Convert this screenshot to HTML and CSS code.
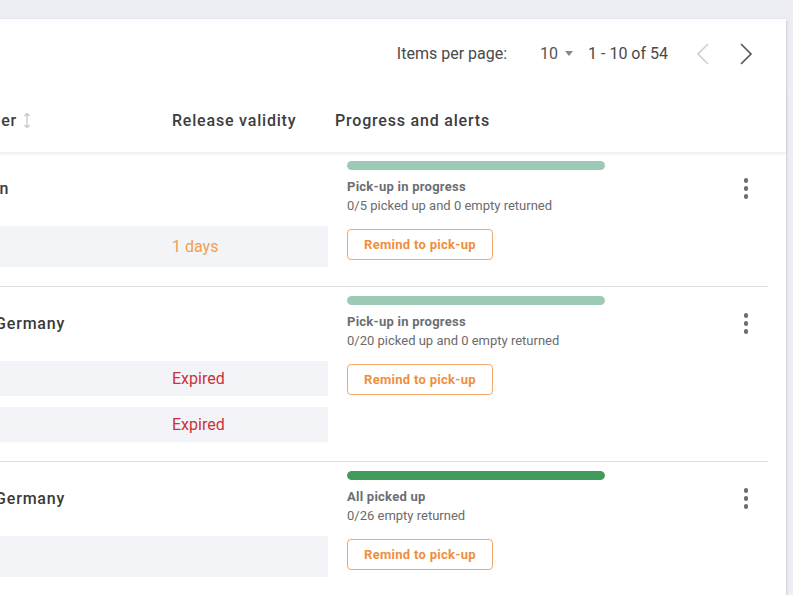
FILE: index.html
```html
<!DOCTYPE html>
<html lang="en">
<head>
    <meta charset="utf-8">
    <title>Releases</title>
    <link rel="stylesheet" href="styles.css">
</head>
<body>
<div class="page">
    <div class="card">
        <!-- paginator -->
        <div class="paginator">
            <span class="pg-label">Items per page:</span>
            <span class="pg-size">10<i class="caret"></i></span>
            <span class="pg-range">1 - 10 of 54</span>
            <button class="pg-btn disabled" type="button">
                <svg width="14" height="22" viewBox="0 0 14 22"><path d="M12 1L2 11l10 10" fill="none" stroke="currentColor" stroke-width="1.6"/></svg>
            </button>
            <button class="pg-btn" type="button">
                <svg width="14" height="22" viewBox="0 0 14 22"><path d="M2 1l10 10L2 21" fill="none" stroke="currentColor" stroke-width="1.6"/></svg>
            </button>
        </div>
        <!-- table head -->
        <div class="thead">
            <div class="th th-name">Shipping carrier
                <svg class="sort" width="8" height="17" viewBox="0 0 8 17"><path d="M4 1.5v14M1.5 4L4 1.5 6.5 4M1.5 13L4 15.5 6.5 13" fill="none" stroke="currentColor" stroke-width="1.2"/></svg>
            </div>
            <div class="th th-valid">Release validity</div>
            <div class="th th-progress">Progress and alerts</div>
        </div>
        <!-- rows -->
        <div class="trow">
            <div class="cells">
                <div class="name">Maersk Taiwan</div>
                <div class="sub-row"><span></span><span class="val warn">1 days</span></div>
            </div>
            <div class="progress">
                <div class="bar"><div class="bar-fill half"></div></div>
                <div class="p-title">Pick-up in progress</div>
                <div class="p-desc">0/5 picked up and 0 empty returned</div>
                <button class="btn-remind" type="button">Remind to pick-up</button>
            </div>
            <div class="kebab"><i></i><i></i><i></i></div>
        </div>
        <div class="trow">
            <div class="cells">
                <div class="name">Hapag-Lloyd Germany</div>
                <div class="sub-row sm"><span></span><span class="val error">Expired</span></div>
                <div class="sub-row sm"><span></span><span class="val error">Expired</span></div>
            </div>
            <div class="progress">
                <div class="bar"><div class="bar-fill half"></div></div>
                <div class="p-title">Pick-up in progress</div>
                <div class="p-desc">0/20 picked up and 0 empty returned</div>
                <button class="btn-remind" type="button">Remind to pick-up</button>
            </div>
            <div class="kebab"><i></i><i></i><i></i></div>
        </div>
        <div class="trow">
            <div class="cells">
                <div class="name">Hapag-Lloyd Germany</div>
                <div class="sub-row"><span></span><span class="val"></span></div>
            </div>
            <div class="progress">
                <div class="bar"><div class="bar-fill full"></div></div>
                <div class="p-title">All picked up</div>
                <div class="p-desc">0/26 empty returned</div>
                <button class="btn-remind" type="button">Remind to pick-up</button>
            </div>
            <div class="kebab"><i></i><i></i><i></i></div>
        </div>
    </div>
</div>
</body>
</html>
```

FILE: styles.css
```css
html,body{margin:0;padding:0;}
body{background:#eceef3;font-family:Roboto,"Liberation Sans",Arial,sans-serif;color:#3a3a3a;overflow:hidden;}
.page{padding-top:19px;}
.card{margin-left:-125px;width:911px;height:600px;background:#fff;box-shadow:0 1px 3px rgba(0,0,0,.22);}

/* paginator */
.paginator{height:69px;display:flex;align-items:center;justify-content:flex-end;padding-right:20px;font-size:16px;color:#4a4a4a;}
.pg-label{margin-right:33px;}
.pg-size{display:flex;align-items:center;color:#555;margin-right:15px;}
.pg-size .caret{display:inline-block;width:0;height:0;border:4px solid transparent;border-top:5px solid #888;border-bottom:0;margin-left:7px;}
.pg-range{margin-right:15px;}
.pg-btn{width:40px;height:40px;border:0;background:none;padding:0;display:flex;align-items:center;justify-content:center;color:#555;cursor:pointer;}
.pg-btn.disabled{color:#cfcfcf;margin-right:3px;}

/* head */
.thead{height:64px;display:flex;align-items:center;font-size:16px;font-weight:500;letter-spacing:.8px;color:#3d3d3d;box-shadow:0 2px 3px rgba(0,0,0,.07);position:relative;}
.th-name{width:281px;padding-left:16px;display:flex;align-items:center;white-space:nowrap;}
.th-name .sort{color:#c4c4c4;margin-left:6px;}
.th-valid{width:163px;}

/* rows */
.trow{display:flex;margin-right:18px;border-bottom:1px solid #dcdcdc;}
.cells{width:453px;padding-top:26px;padding-bottom:19px;}
.name{padding-left:16px;line-height:22px;font-size:16px;font-weight:500;letter-spacing:.8px;color:#3a3a3a;margin-bottom:26px;white-space:nowrap;}
.sub-row{display:grid;grid-template-columns:297px 156px;align-items:center;height:41px;background:#f3f4f7;font-size:16px;}
.sub-row.sm{height:35px;}
.sub-row.sm + .sub-row.sm{margin-top:11px;}
.val.warn{color:#efa04f;}
.val.error{color:#c8323a;}

.progress{margin-left:19px;padding-top:9px;}
.bar{width:258px;height:9px;border-radius:5px;background:#e6e6e6;overflow:hidden;}
.bar-fill{height:100%;border-radius:5px;}
.bar-fill.half{width:100%;background:#9dcab4;}
.bar-fill.full{width:100%;background:#3f9a5c;}
.p-title{margin-top:8px;line-height:18px;font-size:13px;font-weight:700;letter-spacing:.25px;color:#6c6e72;}
.p-desc{line-height:20px;font-size:13px;color:#6b6b6b;}
.btn-remind{margin-top:13px;height:31px;padding:0 16px;border:1px solid #f1a86c;border-radius:4px;background:#fff;font-family:inherit;font-size:13px;font-weight:700;letter-spacing:.3px;color:#ee8f40;cursor:pointer;}

.kebab{margin-left:auto;margin-right:10px;width:24px;padding-top:26px;display:flex;flex-direction:column;align-items:center;gap:3.5px;}
.kebab i{display:block;width:4.5px;height:4.5px;border-radius:50%;background:#6b6b6b;}
```
